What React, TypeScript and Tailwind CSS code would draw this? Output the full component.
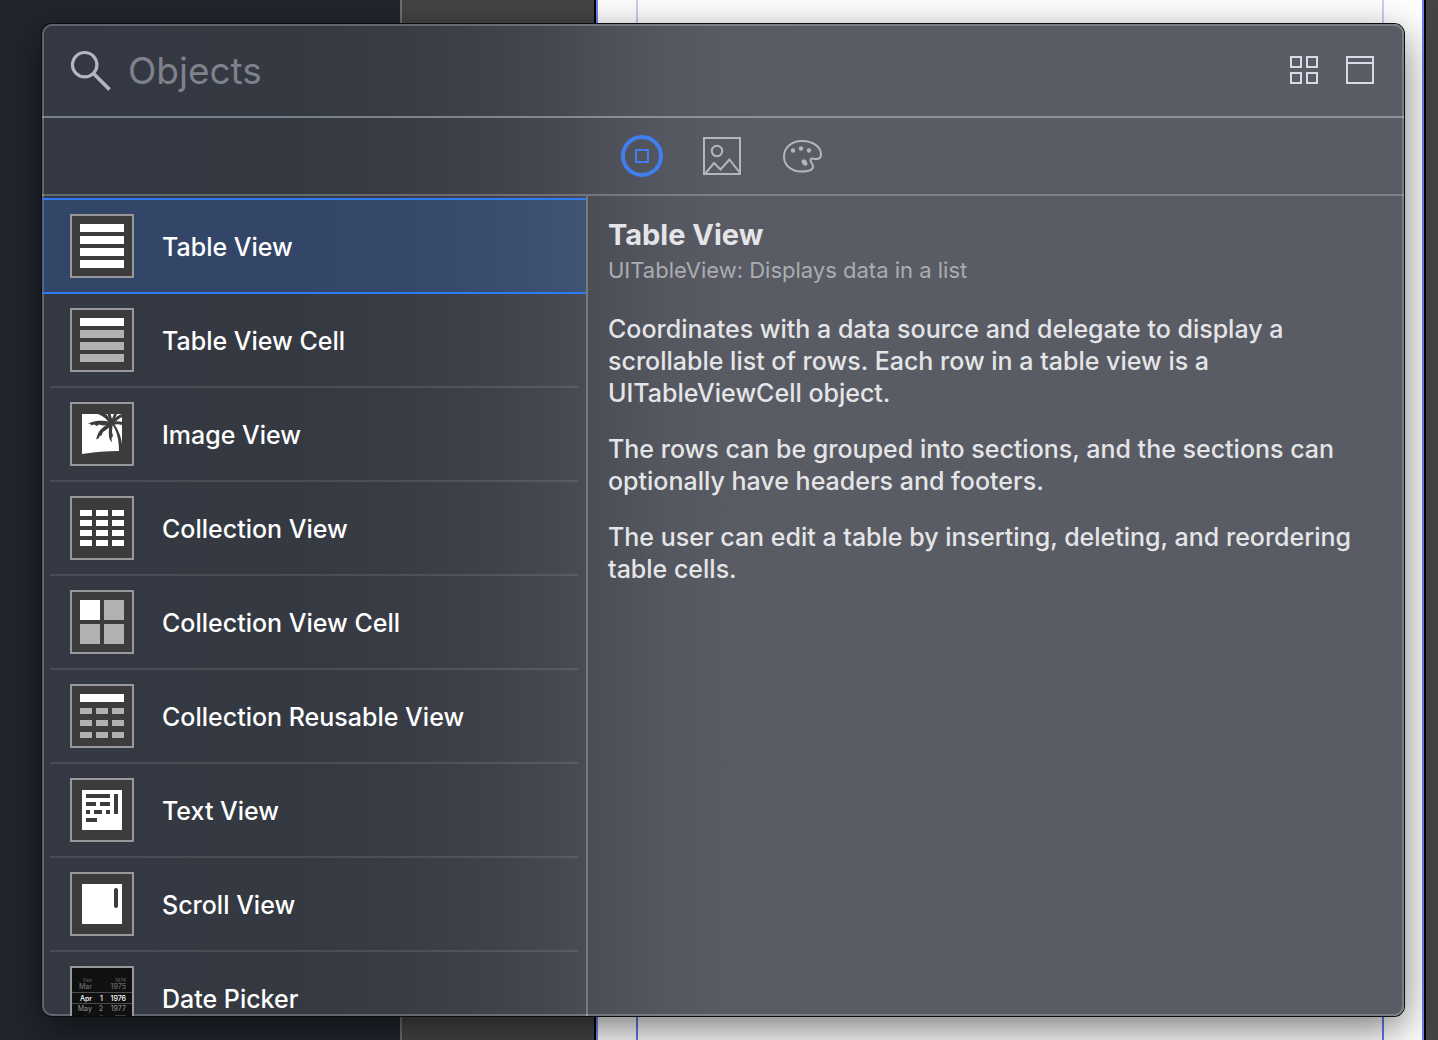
import { useState, type ReactNode } from "react";
import clsx from "clsx";

const WHITE = "#ffffff";
const DIM = "#b1b1b1";
const INK = "#3c3c3c";

type Box = [x: number, y: number, w: number, h: number, fill: string];

function Glyph({ boxes, children }: { boxes: Box[]; children?: ReactNode }) {
  return (
    <svg viewBox="0 0 64 64" className="-m-0.5 size-16 shrink-0" aria-hidden="true">
      {boxes.map(([x, y, w, h, fill], i) => (
        <rect key={i} x={x} y={y} width={w} height={h} fill={fill} />
      ))}
      {children}
    </svg>
  );
}

function cells(xs: number[], ys: number[], w: number, h: number, fill: string): Box[] {
  return ys.flatMap((y) => xs.map((x): Box => [x, y, w, h, fill]));
}

const tableView = <Glyph boxes={cells([10], [10, 22, 34, 46], 44, 8, WHITE)} />;

const tableViewCell = (
  <Glyph boxes={[[10, 10, 44, 8, WHITE], ...cells([10], [22, 34, 46], 44, 8, DIM)]} />
);

const imageView = (
  <Glyph boxes={[]}>
    <path d="M12 12H52V44L49 40V49C36 49 24 50 12 52Z" fill={WHITE} />
    <g fill={INK}>
      <path d="M39 21C37 17 33 14 28 12H36C38 14 40 17 41 20Z" />
      <path d="M40 20L37.500 12H40.500L42 17L44 12H47L43 21Z" />
      <path d="M42 20C44 16 48 13 52 12V15C48 17 46 19 43 22Z" />
      <path d="M42 21C46 19 49 19 52 20V23C49 22 46 22 43 23Z" />
      <path d="M40 20C34 18 27 18.500 22 20L18 21.500L21 22L20 23.500L24 22.500L27 24L29 22.500L33 23.500L40 23Z" />
      <path d="M39 22C34 24 29 28 27.500 33L26 37.500L29 36L29.500 34L31.500 33.500L33 30L36 28L41 24Z" />
      <path d="M39.500 23C38.500 28 38.500 33 39.500 37L42 40.500L41.500 36L43 34L42 30L42.500 24Z" />
      <path d="M42 22C47 29 49 38 49 49H52V42C51 34 48 27 44 22Z" />
      <circle cx="41" cy="21.500" r="2.600" />
    </g>
  </Glyph>
);

const collectionView = <Glyph boxes={cells([10, 26, 42], [14, 24, 34, 44], 12, 6, WHITE)} />;

const collectionViewCell = (
  <Glyph
    boxes={[
      [10, 10, 20, 20, WHITE],
      [34, 10, 20, 20, DIM],
      [10, 34, 20, 20, DIM],
      [34, 34, 20, 20, DIM],
    ]}
  />
);

const reusableView = (
  <Glyph boxes={[[10, 10, 44, 8, WHITE], ...cells([10, 26, 42], [24, 36, 48], 12, 6, DIM)]} />
);

const textView = (
  <Glyph
    boxes={[
      [12, 12, 40, 40, WHITE],
      [16, 16, 24, 4, INK],
      [44, 16, 4, 20, INK],
      [16, 24, 10, 4, INK],
      [30, 24, 10, 4, INK],
      [16, 32, 4, 4, INK],
      [24, 32, 8, 4, INK],
      [36, 32, 4, 4, INK],
      [16, 40, 11, 4, INK],
    ]}
  />
);

const scrollView = (
  <Glyph boxes={[[12, 12, 40, 40, WHITE]]}>
    <rect x="44" y="16" width="4" height="20" rx="2" fill={INK} />
  </Glyph>
);

function DateLine({ month, day, year, className }: { month: string; day: string; year: string; className: string }) {
  return (
    <span className={clsx("grid shrink-0 grid-cols-[20px_11px_23px] text-right", className)}>
      <span>{month}</span>
      <span>{day}</span>
      <span>{year}</span>
    </span>
  );
}

const datePicker = (
  <span className="flex size-full flex-col overflow-hidden bg-[#101010] pt-[9px]">
    <DateLine month="Feb" day="" year="1974" className="h-1.5 text-[5px] leading-1.5 text-[#5a5a5a]" />
    <DateLine month="Mar" day="" year="1975" className="h-[9px] text-[7px] leading-[7px] text-[#6c6c6c]" />
    <DateLine
      month="Apr"
      day="1"
      year="1976"
      className="h-3 border-y border-[#4c4c4c] text-[7px] leading-[11px] font-medium text-white"
    />
    <DateLine month="May" day="2" year="1977" className="h-[9px] text-[7px] leading-[10px] text-[#808080]" />
    <DateLine month="Jun" day="3" year="1978" className="h-2 text-[5px] leading-2 text-[#606060]" />
  </span>
);

const items: { name: string; icon: ReactNode }[] = [
  { name: "Table View", icon: tableView },
  { name: "Table View Cell", icon: tableViewCell },
  { name: "Image View", icon: imageView },
  { name: "Collection View", icon: collectionView },
  { name: "Collection View Cell", icon: collectionViewCell },
  { name: "Collection Reusable View", icon: reusableView },
  { name: "Text View", icon: textView },
  { name: "Scroll View", icon: scrollView },
  { name: "Date Picker", icon: datePicker },
];

function EditorBackdrop() {
  return (
    <div className="absolute inset-0 flex" aria-hidden="true">
      <div className="w-[400px] shrink-0 bg-[#21252d]" />
      <div className="w-[196px] shrink-0 border-r-2 border-l-2 border-r-black border-l-[#707070] bg-[#444444]" />
      <div className="flex flex-1 justify-between border-x-2 border-[#7083f5] bg-white px-[38px]">
        <div className="w-0.5 bg-linear-to-b from-[#c9cffa] to-[#6476f0]" />
        <div className="w-0.5 bg-linear-to-b from-[#c9cffa] to-[#6476f0]" />
      </div>
      <div className="w-3.5 shrink-0 border-l-2 border-black bg-[#444444]" />
    </div>
  );
}

function SearchBar() {
  return (
    <header className="flex h-[94px] shrink-0 items-center border-b-2 border-[#cad6e0]/45 px-7">
      <label htmlFor="object-search" className="shrink-0">
        <svg viewBox="0 0 42 42" className="size-[42px]" fill="none" stroke="#b3b7c3" aria-hidden="true">
          <circle cx="14.700" cy="15.700" r="12.200" strokeWidth="3.200" />
          <path d="M23.500 24.500L39.500 40.500" strokeWidth="3.800" />
        </svg>
      </label>
      <input
        id="object-search"
        type="text"
        aria-label="Search objects"
        placeholder="Objects"
        className="ml-4 h-14 min-w-0 flex-1 bg-transparent text-[37px] text-white outline-none placeholder:text-[#7f828c] placeholder:opacity-100"
      />
      <button type="button" aria-label="Icon view" className="ml-4 flex size-8 items-center justify-center">
        <svg viewBox="0 0 28 28" className="size-7" fill="none" stroke="#d8dae6" strokeWidth="2">
          <path d="M1 1H11V11H1ZM17 1H27V11H17ZM1 17H11V27H1ZM17 17H27V27H17Z" />
        </svg>
      </button>
      <button type="button" aria-label="Toggle details" className="ml-6 flex size-8 items-center justify-center">
        <svg viewBox="0 0 28 28" className="size-7" fill="none" stroke="#d8dae6" strokeWidth="2">
          <path d="M1 1H27V27H1ZM1 7H27" />
        </svg>
      </button>
    </header>
  );
}

function LibraryTabs() {
  return (
    <nav
      className="flex h-[78px] shrink-0 items-center justify-center gap-[38px] border-b-2 border-[#d0d6d8]/30 pr-0.5"
      aria-label="Library"
    >
      <button type="button" aria-label="Objects" aria-pressed="true">
        <svg viewBox="0 0 42 42" className="size-[42px]" fill="none" stroke="#417ff0">
          <circle cx="21" cy="21" r="19" strokeWidth="4" />
          <rect x="15" y="15" width="12" height="12" strokeWidth="2" />
        </svg>
      </button>
      <button type="button" aria-label="Media">
        <svg viewBox="0 0 42 42" className="size-[42px]" fill="none" stroke="#b4b7b9" strokeWidth="2">
          <rect x="3" y="3" width="36" height="36" />
          <circle cx="16" cy="16" r="5.200" />
          <path d="M4 39L13 28L19.500 34.500L28.500 24.500L39 38" />
        </svg>
      </button>
      <button type="button" aria-label="Colors">
        <svg viewBox="0 0 42 42" className="size-[42px]" fill="none" stroke="#b4b7b9" strokeWidth="2">
          <path d="M21 6C11 6 3 12 3 21.500C3 31 11 36.500 20 36.500C27 36.500 32 35 32 31.500C32 29 29.500 27.500 29.500 25C29.500 22.500 32 24 35 24C38.500 24 40 22.500 40 19.500C40 11 31 6 21 6Z" />
          <g fill="#b4b7b9" stroke="none">
            <circle cx="12" cy="15.500" r="2.200" />
            <circle cx="20" cy="13.500" r="2.200" />
            <circle cx="28" cy="15.500" r="2.200" />
            <ellipse cx="23.500" cy="27.500" rx="2.500" ry="3.400" transform="rotate(-38 23.500 27.500)" />
          </g>
        </svg>
      </button>
    </nav>
  );
}

export default function App() {
  const [selected, setSelected] = useState(0);

  return (
    <div className="relative h-screen overflow-hidden bg-[#21252d] font-[Inter,sans-serif]">
      <EditorBackdrop />
      <div className="relative h-full py-6 pr-[34px] pl-[42px]">
        <main className="relative flex h-full flex-col rounded-[10px] bg-[linear-gradient(90deg,#343842_0px,#353942_260px,#393c45_360px,#3f424a_450px,#464951_520px,#4d5058_565px,#54575f_620px,#585b63_680px,#595c64_760px,#595c64_100%)] text-white shadow-[0_0_0_1px_#0b0c0e,0_12px_40px_rgba(0,0,0,0.55)]">
          <div className="pointer-events-none absolute inset-0 rounded-[10px] border-2 border-white/22" />
          <div className="relative flex min-h-0 flex-1 flex-col overflow-hidden rounded-[10px]">
            <SearchBar />
            <LibraryTabs />
            <div className="flex min-h-0 flex-1">
              <ul className="w-[546px] shrink-0 overflow-hidden border-r-2 border-white/25 pt-0.5">
                {items.map((item, i) => (
                  <li key={item.name} className={clsx(i !== selected && "px-2")}>
                    <button
                      type="button"
                      aria-pressed={i === selected}
                      onClick={() => setSelected(i)}
                      className={clsx(
                        "flex w-full items-center gap-7 py-3.5 text-left text-[25px] leading-8 font-medium",
                        i === selected
                          ? "border-y-2 border-[#2f7bf6] bg-[#2e68bc]/30 px-7"
                          : "border-b-2 border-white/10 px-5",
                      )}
                    >
                      <span className="flex size-16 shrink-0 items-start overflow-hidden border-2 border-[#98989c] bg-[#3c3c3c]">
                        {item.icon}
                      </span>
                      <span className="pt-0.5">{item.name}</span>
                    </button>
                  </li>
                ))}
              </ul>
              <section className="min-w-0 flex-1 px-5 pt-5 text-[25px] leading-8 text-[#e5e5e7]">
                <h1 className="text-[29px] leading-[38px] font-bold">Table View</h1>
                <p className="text-[22px] leading-8 text-[#abadb1]">UITableView: Displays data in a list</p>
                <div className="mt-[27px] flex flex-col gap-6 font-medium">
                  <p>
                    Coordinates with a data source and delegate to display a scrollable list of rows. Each row in a table
                    view is a UITableViewCell object.
                  </p>
                  <p>
                    The rows can be grouped into sections, and the sections can optionally have headers and footers.
                  </p>
                  <p>The user can edit a table by inserting, deleting, and reordering table cells.</p>
                </div>
              </section>
            </div>
          </div>
        </main>
      </div>
    </div>
  );
}
